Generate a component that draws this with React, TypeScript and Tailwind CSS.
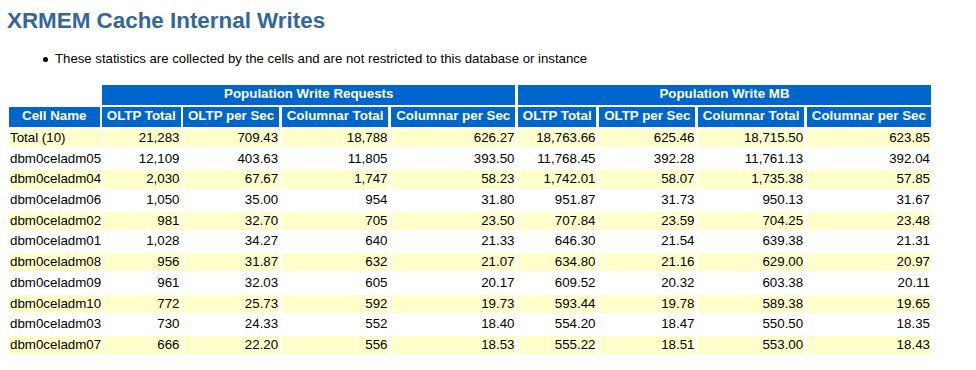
import React from "react";

const rows: string[][] = [
  ["Total (10)", "21,283", "709.43", "18,788", "626.27", "18,763.66", "625.46", "18,715.50", "623.85"],
  ["dbm0celadm05", "12,109", "403.63", "11,805", "393.50", "11,768.45", "392.28", "11,761.13", "392.04"],
  ["dbm0celadm04", "2,030", "67.67", "1,747", "58.23", "1,742.01", "58.07", "1,735.38", "57.85"],
  ["dbm0celadm06", "1,050", "35.00", "954", "31.80", "951.87", "31.73", "950.13", "31.67"],
  ["dbm0celadm02", "981", "32.70", "705", "23.50", "707.84", "23.59", "704.25", "23.48"],
  ["dbm0celadm01", "1,028", "34.27", "640", "21.33", "646.30", "21.54", "639.38", "21.31"],
  ["dbm0celadm08", "956", "31.87", "632", "21.07", "634.80", "21.16", "629.00", "20.97"],
  ["dbm0celadm09", "961", "32.03", "605", "20.17", "609.52", "20.32", "603.38", "20.11"],
  ["dbm0celadm10", "772", "25.73", "592", "19.73", "593.44", "19.78", "589.38", "19.65"],
  ["dbm0celadm03", "730", "24.33", "552", "18.40", "554.20", "18.47", "550.50", "18.35"],
  ["dbm0celadm07", "666", "22.20", "556", "18.53", "555.22", "18.51", "553.00", "18.43"],
];

const subHeaders = [
  "Cell Name",
  "OLTP Total",
  "OLTP per Sec",
  "Columnar Total",
  "Columnar per Sec",
  "OLTP Total",
  "OLTP per Sec",
  "Columnar Total",
  "Columnar per Sec",
];

export default function App() {
  return (
    <div
      className="w-[976px] h-[370px] bg-white text-black overflow-hidden"
      style={{ fontFamily: '"Liberation Sans", Arial, sans-serif' }}
    >
      <div className="pt-[8px] pl-[7px]">
        <h2 className="text-[22.4px] leading-[26px] font-bold text-[#336699] whitespace-nowrap">
          XRMEM Cache Internal Writes
        </h2>
      </div>
      <div className="mt-[16.5px] flex items-center h-[16px] pl-[43px]">
        <span className="w-[5px] h-[5px] rounded-full bg-black mr-[7px] mt-[1px]" />
        <span className="text-[13.2px] leading-[16px] whitespace-nowrap">
          These statistics are collected by the cells and are not restricted to this database or instance
        </span>
      </div>
      <div className="mt-[18.5px] pl-[9px]">
        <div className="grid grid-cols-[90.5px_78.5px_96.2px_106.8px_124.5px_78.5px_96.5px_106.2px_124.3px] gap-x-[2.5px] gap-y-[2.5px] text-[13.33px] w-max">
          <div className="h-[19.5px]" />
          <div className="col-span-4 h-[19.5px] bg-[#0066CC] text-white font-bold text-center leading-[17px] whitespace-nowrap">
            Population Write Requests
          </div>
          <div className="col-span-4 h-[19.5px] bg-[#0066CC] text-white font-bold text-center leading-[17px] whitespace-nowrap">
            Population Write MB
          </div>
          {subHeaders.map((h, i) => (
            <div
              key={"h" + i}
              className="h-[19.5px] bg-[#0066CC] text-white font-bold text-center leading-[18px] whitespace-nowrap"
            >
              {h}
            </div>
          ))}
          {rows.map((r, ri) =>
            r.map((c, ci) => (
              <div
                key={ri + "-" + ci}
                className={
                  "h-[18.2px] leading-[18.2px] whitespace-nowrap " +
                  (ri % 2 === 0 ? "bg-[#FFFFCC] " : "bg-white ") +
                  (ci === 0 ? "text-left pl-[1px]" : "text-right pr-[1px]")
                }
              >
                {c}
              </div>
            ))
          )}
        </div>
      </div>
    </div>
  );
}
